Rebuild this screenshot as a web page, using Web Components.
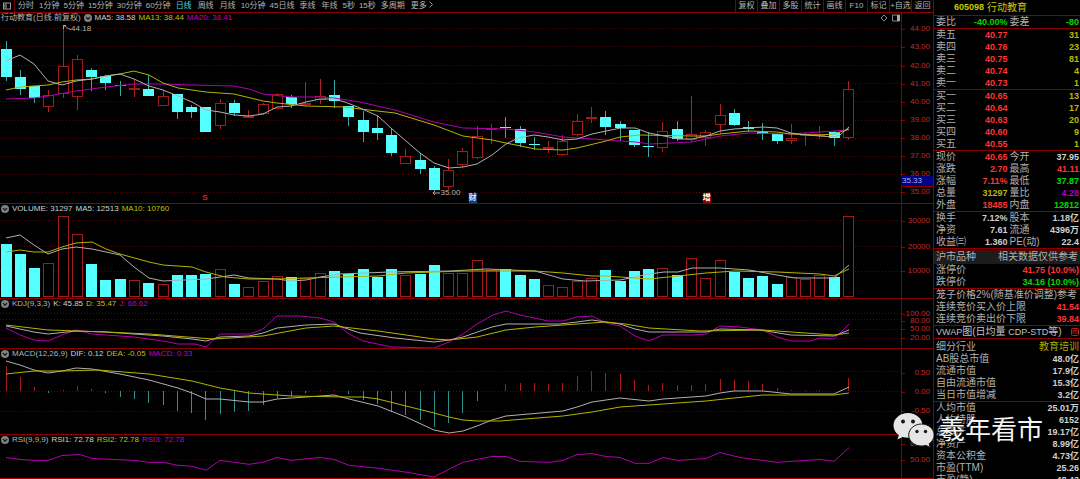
<!DOCTYPE html>
<html lang="zh-CN">
<head>
<meta charset="utf-8">
<title>行动教育 605098</title>
<style>
html,body{margin:0;background:#000;height:100%}
body{overflow:hidden;font-family:"Liberation Sans","Noto Sans CJK SC",sans-serif;color:#b4b4b4}
</style>
</head>
<body>
<stock-terminal></stock-terminal>
<script>
const STEP = 14.28, FIRST = 6;
const at = i => FIRST + i * STEP;

/* direction, body top, body bottom, wick top, wick bottom */
const CANDLES = [
['d',49,77,41,81],['d',77,89,70,95],['d',86,98,86,103],['u',95,107,90,112],['u',66,94,25,98],['u',59,97,55,110],
['d',70,77,68,91],['d',76,83,75,90],['d',85,86,81,96],['u',88,90,79,97],['d',89,96,75,96],['u',96,106,90,106],
['d',94,112,94,119],['d',107,112,105,118],['d',107,132,107,132],['u',103,126,99,129],['d',103,113,100,116],['u',116,117,110,118],
['u',104,114,103,115],['u',94,109,93,109],['d',97,104,95,108],['u',103,105,82,106],['u',96,100,79,104],['d',95,101,80,108],
['d',106,117,106,126],['d',120,132,111,142],['d',128,133,116,140],['d',135,153,128,156],['u',156,164,149,164],['d',160,169,153,174],
['d',168,190,166,192],['u',170,187,159,190],['u',151,165,148,167],['u',136,158,126,159],['u',128,129,124,144],['d',127,128,117,138],
['d',129,143,126,147],['d',144,145,137,150],['u',147,148,141,153],['u',141,155,135,156],['u',121,135,114,137],['u',117,119,107,123],
['d',117,127,111,135],['d',124,128,121,141],['d',130,145,130,147],['d',146,147,132,157],['u',131,148,122,152],['d',129,139,121,141],
['u',134,140,96,142],['u',132,138,130,146],['u',115,125,104,134],['d',113,125,109,126],['d',127,129,121,132],['d',132,134,123,140],
['d',134,141,133,144],['u',138,141,124,144],['u',134,136,132,146],['u',134,135,126,139],['d',132,138,131,146],['u',89,138,81,140]];

const VOLUME = [244,254,268,263,216,234,264,280,279,280,283,284,275,275,274,269,284,287,281,276,277,278,273,271,274,269,277,269,275,274,265,273,273,260,270,269,275,279,285,287,281,278,270,281,271,269,268,275,258,278,260,272,278,276,284,277,279,275,277,216];
const MACD = [366,377,387,393,390,386,389,393,397,399,403,405,411,413,420,414,412,411,405,398,396,393,390,390,394,400,404,412,415,420,427,423,413,401,391,384,383,383,384,383,376,371,373,374,380,385,383,385,385,384,379,380,381,384,388,390,390,390,391,378];

const W='#b0b0b0', Y='#b4b400', M='#b000b0';
const PANELS = {
price:{top:13,height:190,grid:[28,46,65,83,101,120,138,156,174,192],
 ticks:[['44.00',28],['43.00',46],['42.00',65],['41.00',83],['40.00',101],['39.00',120],['38.00',138],['37.00',156],['36.00',174],['35.00',192]],
 lines:[[M,'6,99 34,98 48,96 76,91 106,87 134,84 163,84 192,85 234,86 249,89 263,94 291,97 320,97 334,98 360,102 395,110 434,122 463,128 506,129 535,132 563,137 592,139 635,142 650,144 692,142 720,136 749,133 791,134 849,130'],
 [Y,'6,90 20,87 34,86 48,85 62,82 76,80 92,79 106,76 120,74 134,71 149,75 163,83 178,88 206,92 234,94 263,101 277,103 306,106 345,107 360,109 395,113 434,125 463,136 492,140 506,143 535,149 563,150 577,148 606,141 620,137 640,135 692,136 706,136 720,134 749,131 777,132 791,134 820,135 834,134 849,129'],
 [W,'6,61 20,55 34,64 48,81 62,85 76,81 92,79 106,76 120,74 134,79 149,86 163,90 178,96 192,102 206,110 220,112 234,115 249,116 263,114 277,107 291,106 306,102 320,99 334,99 345,102 360,108 378,116 392,129 406,141 420,153 434,163 449,168 463,167 477,164 492,155 506,144 518,138 534,135 548,137 563,140 577,139 592,134 606,131 621,128 635,128 649,133 664,136 678,139 692,139 706,136 720,131 734,129 749,128 763,127 777,128 791,133 806,135 820,136 834,137 840,135 849,127']]},
volume:{top:203,height:95,grid:[220,246,271],ticks:[['30000',220],['20000',246],['10000',271]],
 lines:[[W,'6,238 20,235 34,245 48,254 62,249 76,247 92,249 106,252 120,255 134,267 149,278 163,281 206,279 234,275 249,278 277,279 291,281 306,280 320,277 340,274 390,272 450,271 486,269 535,271 563,279 585,281 620,280 649,274 664,272 678,272 692,268 720,268 749,270 777,275 795,278 834,278 849,265'],
 [Y,'6,252 20,250 34,252 48,252 62,247 76,243 92,242 106,249 120,254 149,262 163,265 192,267 206,272 225,277 249,279 277,279 306,278 340,277 378,276 406,273 463,271 535,271 563,273 592,276 606,276 649,279 678,276 706,273 735,271 777,272 820,274 834,276 849,269']]},
kdj:{top:298,height:50,grid:[313,319,329,338],ticks:[['100.00',313],['80.00',320],['50.00',329],['20.00',338]],
 lines:[[M,'6,328 20,335 34,340 48,341 62,335 76,330 92,334 134,337 163,341 178,344 195,344 206,347 220,334 250,334 263,329 277,316 300,316 320,318 334,322 349,334 363,341 392,347 434,348 449,342 463,334 477,324 493,315 506,311 520,315 548,321 563,321 577,317 592,316 606,323 620,326 635,336 649,341 663,335 692,335 706,334 720,326 740,327 763,330 777,337 791,341 810,341 820,338 834,339 849,324'],
 [W,'6,326 20,329 34,332 48,334 76,331 106,332 134,334 163,336 192,339 206,341 220,337 249,336 263,333 277,328 306,325 334,324 345,328 360,333 395,338 434,342 449,340 463,337 492,327 506,324 560,324 577,322 592,320 606,322 620,324 635,329 649,332 706,332 720,329 760,330 791,335 834,336 849,330'],
 [Y,'6,325 48,330 106,332 149,334 213,339 263,336 306,328 334,326 378,331 434,339 449,340 477,337 506,330 535,327 577,324 606,322 625,324 649,328 700,331 763,330 834,335 849,333']]},
macd:{top:348,height:86,grid:[371,391,411],ticks:[['0.50',372],['0.00',391],['-0.50',411]],
 lines:[[W,'6,361 20,365 34,370 48,373 62,371 76,368 92,369 120,374 149,380 178,388 192,393 206,399 220,399 249,402 263,402 277,399 306,397 334,395 349,399 378,406 406,417 434,430 449,433 463,431 477,426 492,420 506,416 563,411 577,407 592,402 620,398 649,401 663,399 706,396 720,393 734,391 763,391 791,394 834,394 849,387'],
 [Y,'6,374 34,371 62,371 98,370 149,374 192,381 220,388 249,393 291,396 345,397 363,397 378,399 406,406 434,413 449,417 463,420 477,421 500,421 563,416 592,412 620,407 649,405 706,401 734,398 763,395 834,395 849,393']]},
rsi:{top:434,height:45,grid:[460],ticks:[['80.00',443],['50.00',460]],
 lines:[[M,'6,458 20,460 34,461 48,461 62,456 80,455 92,459 134,461 149,463 163,463 178,466 192,467 206,471 220,461 249,465 263,463 277,458 291,461 320,458 334,460 349,466 378,469 406,473 434,478 449,470 463,463 477,460 492,457 506,457 520,462 549,463 563,461 577,455 592,454 606,457 620,458 635,464 649,464 663,458 678,461 706,459 720,453 740,458 763,461 777,463 820,460 834,462 849,448']]}
};

const bar = (i, dir, top, bottom) => {
  const x = Math.round(at(i) - 5.5);
  return dir === 'd'
    ? `<rect x="${x}" y="${top}" width="11" height="${Math.max(1, bottom - top)}" fill="#54ffff"/>`
    : `<rect x="${x + .5}" y="${top + .5}" width="10" height="${Math.max(1, bottom - top - 1)}" fill="#000" stroke="#a01c1c"/>`;
};
const stem = (i, a, b, color) => `<rect x="${Math.round(at(i) - .5)}" y="${a}" width="1" height="${b - a}" fill="${color}"/>`;
const MARKS = {
  price: () => CANDLES.map(([d,t,b,h,l], i) => stem(i, h, l, d === 'd' ? '#37a8a8' : '#b42020') + bar(i, d, t, b)).join(''),
  volume: () => VOLUME.map((v, i) => bar(i, CANDLES[i][0], v, 297)).join(''),
  macd: () => MACD.map((v, i) => v < 391 ? stem(i, v, 391, '#a81e1e') : stem(i, 391, v, '#2f9090')).join('')
};

class ChartPanel extends HTMLElement {
  connectedCallback() {
    const name = this.getAttribute('name'), p = PANELS[name];
    const pct = y => ((y - p.top) / p.height * 100) + '%';
    this.attachShadow({mode:'open'}).innerHTML = `<style>
:host{display:grid;grid-template-columns:minmax(0,1fr) 32px;min-height:0;border-top:1px solid #8c0000;box-sizing:border-box;position:relative}
.plot{position:relative;min-width:0;min-height:0;overflow:hidden}
svg{position:absolute;left:0;top:-1px;width:100%;height:calc(100% + 1px);display:block}
polyline{fill:none;stroke-width:1;vector-effect:non-scaling-stroke}
.legend{position:relative;display:flex;align-items:center;gap:3px;height:10px;padding-left:1px;font-size:8px;line-height:10px;white-space:nowrap}
.axis{position:relative;border-left:1px solid #8c0000;color:#c42828;font-size:8px;line-height:10px}
.axis span{position:absolute;right:3px;transform:translateY(-50%)}
.axis i{position:absolute;left:0;width:3px;height:1px;background:#8c0000}
</style>
<div class="plot"><svg viewBox="0 ${p.top} 901 ${p.height}" preserveAspectRatio="none" aria-hidden="true">
${p.grid.map(y => `<line x1="0" x2="901" y1="${y+.5}" y2="${y+.5}" stroke="#600000" stroke-dasharray="1 2"/>`).join('')}
<g shape-rendering="crispEdges">${MARKS[name] ? MARKS[name]() : ''}</g>
${p.lines.map(([c, pts]) => `<polyline points="${pts}" stroke="${c}"/>`).join('')}
</svg><div class="legend"><slot></slot></div><slot name="note"></slot></div>
<div class="axis">${p.ticks.map(([t, y]) => `<i style="top:${pct(y)}"></i><span style="top:${pct(y)}">${t}</span>`).join('')}<slot name="axis"></slot></div>`;
  }
}

class FoldButton extends HTMLElement {
  connectedCallback() {
    this.attachShadow({mode:'open'}).innerHTML = `<style>
:host{display:block;width:8px;height:8px}
button{all:unset;display:block;width:8px;height:8px}svg{display:block}
</style><button aria-label="指标菜单"><svg width="8" height="8" viewBox="0 0 8 8"><circle cx="4" cy="4" r="4" fill="#808080"/><path d="M2 3.2 4 5.2 6 3.2" fill="none" stroke="#111" stroke-width="1.2"/></svg></button>`;
  }
}

class PeriodBar extends HTMLElement {
  connectedCallback() {
    const periods = ['分时','1分钟','5分钟','15分钟','30分钟','60分钟','日线','周线','月线','10分钟','45日线','季线','年线','5秒','15秒','多周期','更多'];
    const tools = ['复权','叠加','多股','统计','画线','F10','标记','+自选','返回'];
    this.attachShadow({mode:'open'}).innerHTML = `<style>
:host{display:flex;justify-content:space-between;height:12px;min-width:0;overflow:hidden}
button{all:unset;font-size:8px;line-height:12px;white-space:nowrap;text-align:center;color:#b4b4b4;box-sizing:border-box}
div{display:flex}
.periods button{padding:0 3px}
.periods .short{padding:0 2px}
.periods .on{color:#3fd8e0}
.periods .pane{width:15px;padding:0 3px;border-right:1px solid #7a0000;display:flex;align-items:center}
.tools button{width:22px;border-left:1px solid #7a0000}
</style><div class="periods"><button class="pane" aria-label="侧栏"><svg width="8" height="8" viewBox="0 0 8 8" fill="none" stroke="#999"><rect x=".5" y="1" width="7" height="6"/><path d="M3 1v6"/><path d="M1.8 2.5v3"/></svg></button>
${periods.map(t => `<button class="${/\d/.test(t) ? 'short' : ''} ${t === '日线' ? 'on' : ''}">${t}${t === '更多' ? ' <svg width="4" height="7" viewBox="0 0 4 7" fill="none" stroke="#999"><path d="M.5.5 3.5 3.5.5 6.5"/></svg>' : ''}</button>`).join('')}</div>
<div class="tools">${tools.map(t => `<button>${t}</button>`).join('')}</div>`;
  }
}

class QuoteTable extends HTMLElement {
  connectedCallback() {
    const rows = this.textContent.trim().split('\n').map(r => r.trim().split('|'));
    const cell = (v, i, row) => {
      const m = v.match(/^([rgywmc]):(.*)$/);
      return m ? `<td class="${m[1]}">${m[2]}</td>` : `<th scope="row"${row.length === 1 ? ' colspan="2"' : ''}>${v}</th>`;
    };
    const widths = {3:[22,28,50],4:[22,28,22,28]}[rows[0].length];
    this.attachShadow({mode:'open'}).innerHTML = `<style>
:host{display:block;border-bottom:1px solid #8c0000;padding:0 1px 0 2px}
table{width:100%;border-collapse:collapse;table-layout:${widths ? 'fixed' : 'auto'}}
tr{height:12px}
th,td{padding:0;font-size:10px;line-height:12px;height:12px;white-space:nowrap;overflow:visible}
th{text-align:left;font-weight:400;color:#b0b0b0}
td{text-align:right;font-size:9px;font-weight:700}
.r{color:#ff3434}.g{color:#00d800}.y{color:#b8b800}.w{color:#cfcfcf}.m{color:#b000b0}
.c{color:#a8a800;font-weight:400;font-size:10px}
th:nth-child(3){padding-left:2px}
</style><table>${widths ? `<colgroup>${widths.map(w => `<col style="width:${w}%">`).join('')}</colgroup>` : ''}${rows.map(r => `<tr>${r.map(cell).join('')}</tr>`).join('')}</table>`;
  }
}

class QuotePanel extends HTMLElement {
  connectedCallback() {
    this.attachShadow({mode:'open'}).innerHTML = `<style>
:host{display:block;border-left:1px solid #8c0000;min-height:0;overflow:hidden}
h1{margin:0;display:flex;gap:3px;padding-left:20px;height:15px;align-items:center;font-size:9px;line-height:15px;color:#c8c800;border-bottom:1px solid #8c0000}
h1 span{font-size:10px;font-weight:400}
.band{display:flex;justify-content:space-between;margin-top:1px;background:#1c1c1c;font-size:10px;line-height:12px;height:12px;padding:0 2px;border:solid #5c0000;border-width:1px 0;color:#b0b0b0}
.line{display:flex;justify-content:space-between;align-items:center;font-size:10px;line-height:12px;height:12px;padding:0 1px 0 2px;border-bottom:1px solid #8c0000;white-space:nowrap;color:#c0c0c0}
.line b{font-size:9px;font-weight:400}
.gap{padding-top:2px}
</style>
<h1>605098 <span>行动教育</span></h1>
<quote-table>委比|g:-40.00%|委差|g:-80</quote-table>
<quote-table>卖五|r:40.77|y:31
卖四|r:40.76|y:23
卖三|r:40.75|y:81
卖二|r:40.74|y:4
卖一|r:40.73|y:1</quote-table>
<quote-table>买一|r:40.65|y:13
买二|r:40.64|y:17
买三|r:40.63|y:20
买四|r:40.60|y:9
买五|r:40.55|y:1</quote-table>
<quote-table>现价|r:40.65|今开|w:37.95
涨跌|r:2.70|最高|r:41.11
涨幅|r:7.11%|最低|g:37.87
总量|y:31297|量比|m:4.28
外盘|r:18485|内盘|g:12812</quote-table>
<quote-table>换手|w:7.12%|股本|w:1.18亿
净资|w:7.61|流通|w:4396万
收益㈢|w:1.360|PE(动)|w:22.4</quote-table>
<div class="band"><span>沪市品种</span><span>相关数据仅供参考</span></div>
<quote-table>涨停价|r:41.75 (10.0%)
跌停价|g:34.16 (10.0%)</quote-table>
<quote-table>笼子价格2%(随基准价调整)参考
连续竞价买入价上限|r:41.54
连续竞价卖出价下限|r:39.84</quote-table>
<div class="line"><span><b>VWAP</b>图(日均量 <b>CDP-STD</b>等)</span><svg width="8" height="8" viewBox="0 0 8 8" fill="none" stroke="#c02020"><rect x=".5" y=".5" width="7" height="7" rx="1"/><path d="M2 2v4M4 2v4M6 2v4M2 2.5h4" stroke-width=".8"/></svg></div>
<div class="gap"><quote-table>细分行业|c:教育培训
AB股总市值|w:48.0亿
流通市值|w:17.9亿
自由流通市值|w:15.3亿
当日市值增减|w:3.2亿</quote-table></div>
<quote-table>人均市值|w:25.01万
人均持股|w:6152
总资产|w:19.17亿
净资产|w:8.99亿
资本公积金|w:4.73亿
市盈(TTM)|w:25.26
市盈(静)|w:48.43</quote-table>`;
  }
}

class WaterMark extends HTMLElement {
  connectedCallback() {
    this.attachShadow({mode:'open'}).innerHTML = `<style>
:host{position:absolute;right:37px;bottom:31px;display:flex;align-items:center;gap:5px;color:#f4f4f4;font-size:26px;line-height:36px;text-shadow:1px 1px 1px #000;white-space:nowrap}
svg{display:block}
</style><svg width="41" height="36" viewBox="0 0 41 36"><path d="M15 1C7 1 .5 6.500.5 13.500c0 4 2 7.300 5.300 9.500l-1.300 4.500 5-2.600c1.700.5 3.500.8 5.500.8 8 0 14.500-5.500 14.500-12.200S23 1 15 1z" fill="#e6e6e6"/><circle cx="10" cy="9.500" r="2" fill="#181818"/><circle cx="20" cy="9.500" r="2" fill="#181818"/><path d="M28.500 12c-7.200 0-12.800 5-12.800 11s5.600 11 12.800 11c1.500 0 3-.2 4.400-.7l4.200 2.200-1-3.700c3-2 5-5.200 5-8.800 0-6-5.600-11-12.600-11z" fill="#e6e6e6" stroke="#181818"/><circle cx="24" cy="19.500" r="1.700" fill="#181818"/><circle cx="32.500" cy="19.500" r="1.700" fill="#181818"/></svg><span>羲年看市</span>`;
  }
}

class StockTerminal extends HTMLElement {
  connectedCallback() {
    this.attachShadow({mode:'open'}).innerHTML = `<style>
:host{display:grid;grid-template-columns:minmax(0,1fr) 147px;height:100vh;position:relative;overflow:hidden}
main{display:grid;grid-template-rows:12px 191fr 95fr 50fr 86fr 45fr;min-width:0;min-height:0}
.y{color:#c0c000}.m{color:#c000c0}.w{color:#d0d0d0}
.note{position:absolute;font-size:8px;line-height:10px;white-space:nowrap;display:flex;align-items:center}
.tag{color:#fff;font-weight:700}
.hi{left:7%;top:6%}.lo{left:48%;top:92%}
.fin{left:52%;bottom:0;background:#14427c;color:#cfe4ff}
.inc{left:78%;bottom:0;background:#8c0000}
.s{left:22%;bottom:0;padding-left:4px;color:#f01010}
.corner{right:1px;top:1px;gap:4px}
.last{position:absolute;left:-1px;right:0;top:86%;height:10px;background:#000084;color:#a4b4e8;font-size:8px;line-height:10px;padding-left:1px;border-bottom:1px solid #8c0000}
.end{border-bottom:1px solid #b00000}
</style>
<main><period-bar></period-bar>
<chart-panel name="price"><span>行动教育(日线.前复权)</span><fold-button></fold-button><span class="w">MA5: 38.58</span><span class="y">MA13: 38.44</span><span class="m">MA20: 38.41</span>
<span slot="note" class="note hi"><svg width="8" height="8" viewBox="0 0 8 8" fill="none" stroke="#aaa"><path d="M.5 4V.5H3M.5.5C3 1 4 4 8 4.500"/></svg>44.18</span>
<span slot="note" class="note lo"><svg width="8" height="8" viewBox="0 0 8 8" fill="none" stroke="#aaa"><path d="M8 4H1M3 2 1 4l2 2"/></svg>35.00</span>
<span slot="note" class="note tag s">S</span><span slot="note" class="note tag fin">财</span><span slot="note" class="note tag inc">增</span>
<span slot="note" class="note corner"><svg width="8" height="8" viewBox="0 0 8 8" fill="none" stroke="#888"><path d="M4 1 7 4 4 7 1 4z"/></svg><svg width="8" height="8" viewBox="0 0 8 8"><path d="M.5 1h7v6h-7z" fill="none" stroke="#888"/><path d="M5 1h3v6H5z" fill="#aaa"/></svg></span>
<span slot="axis" class="last">35.33</span></chart-panel>
<chart-panel name="volume"><fold-button></fold-button><span class="w">VOLUME: 31297</span><span class="w">MA5: 12513</span><span class="y">MA10: 10760</span></chart-panel>
<chart-panel name="kdj"><fold-button></fold-button><span>KDJ(9,3,3)</span><span class="w">K: 45.85</span><span class="y">D: 35.47</span><span class="m">J: 66.62</span></chart-panel>
<chart-panel name="macd"><fold-button></fold-button><span>MACD(12,26,9)</span><span class="w">DIF: 0.12</span><span class="y">DEA: -0.05</span><span class="m">MACD: 0.33</span></chart-panel>
<chart-panel name="rsi" class="end"><fold-button></fold-button><span>RSI(9,9,9)</span><span class="w">RSI1: 72.78</span><span class="y">RSI2: 72.78</span><span class="m">RSI3: 72.78</span></chart-panel>
</main>
<quote-panel></quote-panel><water-mark></water-mark>`;
  }
}
customElements.define('fold-button', FoldButton);
customElements.define('period-bar', PeriodBar);
customElements.define('chart-panel', ChartPanel);
customElements.define('quote-table', QuoteTable);
customElements.define('quote-panel', QuotePanel);
customElements.define('water-mark', WaterMark);
PANELS.price.top = 12;
PANELS.price.height = 191;
customElements.define('stock-terminal', StockTerminal);
</script>
</body>
</html>
